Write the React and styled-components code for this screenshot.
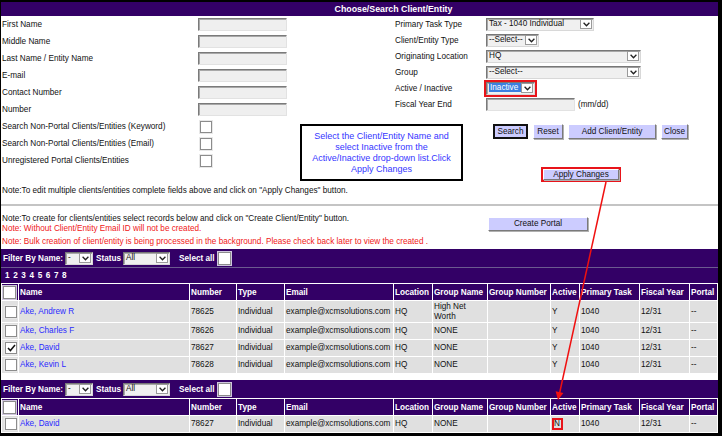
import React from 'react';
import styled, { createGlobalStyle } from 'styled-components';

const PURPLE = '#330066';

const GlobalStyle = createGlobalStyle`
  html, body {
    margin: 0;
    padding: 0;
    background: #fff;
  }
  body {
    font-family: "Liberation Sans", Arial, sans-serif;
    font-size: 8.2px;
    color: #111;
  }
  * {
    box-sizing: border-box;
  }
`;

const Frame = styled.div`
  position: relative;
  width: 722px;
  height: 436px;
  border-style: solid;
  border-color: #000;
  border-width: 2px 4px 3px 1px;
  overflow: hidden;
  background: #fff;
`;

const TitleBar = styled.div`
  height: 14px;
  background: ${PURPLE};
  color: #fff;
  font-weight: bold;
  font-size: 8.8px;
  display: flex;
  align-items: center;
  justify-content: center;
  padding-left: 68px;
`;

const FormArea = styled.div`
  display: flex;
  height: 167px;
`;

const LeftCol = styled.div`
  width: 299px;
  padding-left: 1px;
  display: grid;
  grid-auto-rows: 17px;
  align-content: start;
`;

const FieldRow = styled.div`
  display: grid;
  grid-template-columns: 196px auto;
  align-items: center;
  white-space: nowrap;
`;

const TextInput = styled.span`
  display: block;
  width: ${(p) => p.$w || 89}px;
  height: 13px;
  background: #efefef;
  border: 1px solid;
  border-color: #7a7a7a #e2e2e2 #e2e2e2 #7a7a7a;
  box-shadow: inset 1px 1px 0 #a8a8a8;
`;

const Check = styled.span`
  display: flex;
  align-items: center;
  justify-content: center;
  width: ${(p) => p.$size || 12}px;
  height: ${(p) => p.$size || 12}px;
  margin-left: ${(p) => p.$ml || 0}px;
  background: #fff;
  border: 1px solid #8c8c8c;
  box-shadow: 0 0 0 1px ${(p) => p.$halo || '#e8e8e8'};
`;

const RightCol = styled.div`
  flex: 1;
  display: flex;
  flex-direction: column;
`;

const RightFields = styled.div`
  margin-left: 95px;
  display: grid;
  grid-template-columns: 91px auto;
  grid-auto-rows: 16px;
  align-items: center;
  white-space: nowrap;
`;

const Control = styled.div`
  display: flex;
  align-items: center;
`;

const SelectBox = styled.span`
  display: inline-flex;
  align-items: center;
  width: ${(p) => p.$w}px;
  height: 13px;
  background: #f0f0f0;
  border: 1px solid;
  border-color: #777 #d8d8d8 #d8d8d8 #777;
  box-shadow: inset 1px 1px 0 #a8a8a8;
  padding-left: 1px;
  color: #111;
  font-weight: normal;
`;

const SelectText = styled.span`
  flex: 1;
  min-width: 0;
  line-height: 10px;
  white-space: nowrap;
  overflow: hidden;
  padding-left: 1px;
`;

const Highlight = styled.span`
  background: #3b7fe0;
  color: #fff;
  padding: 0 3px 0 1px;
`;

const ArrowBox = styled.span`
  display: flex;
  align-items: center;
  justify-content: center;
  width: 12px;
  height: 10px;
  margin-right: 1px;
  background: #fff;
  border: 1px solid #9a9a9a;
`;

const RedFrame = styled.span`
  display: inline-flex;
  border: 2px solid #e8141a;
  margin-left: -2px;
  line-height: 8px;
`;

const Hint = styled.span`
  margin-left: 3px;
`;

const BottomRow = styled.div`
  display: flex;
  margin-top: 12px;
`;

const Callout = styled.div`
  width: 163px;
  height: 57px;
  border: 2px solid #000;
  padding-top: 5px;
  color: #3535ff;
  font-size: 9px;
  line-height: 11px;
  text-align: center;
`;

const Actions = styled.div`
  margin-left: 30px;
  display: flex;
  flex-direction: column;
  align-items: flex-start;
`;

const ButtonRow = styled.div`
  display: flex;
  gap: 5px;
`;

const Btn = styled.button`
  width: ${(p) => p.$w}px;
  height: ${(p) => p.$h || 15}px;
  margin-top: ${(p) => p.$mt || 0}px;
  padding: 0;
  font-family: inherit;
  font-size: 8.2px;
  line-height: 8px;
  color: #111;
  background: #ccccff;
  border: 1px solid;
  border-color: ${(p) => (p.$focus ? '#111' : '#fff #7a7a7a #7a7a7a #fff')};
  box-shadow: ${(p) => (p.$focus ? 'inset 0 0 0 1px #111' : '1px 1px 0 #b0b0b0')};
  white-space: nowrap;
`;

const ApplyWrap = styled.span`
  display: inline-flex;
  margin: 28px 0 0 48px;
  border: 2px solid #e8141a;
`;

const NoteLine = styled.div`
  height: 15px;
  line-height: 15px;
  padding-left: 1px;
  white-space: nowrap;
`;

const Rule = styled.div`
  margin-top: 6px;
  height: 2px;
  background: #c4c4c4;
`;

const CreateSection = styled.div`
  display: flex;
  margin-bottom: 2px;
`;

const NoteStack = styled.div`
  width: 487px;
  padding: 8px 0 0 1px;
  white-space: nowrap;
`;

const Note = styled.div`
  line-height: 10px;
  color: ${(p) => (p.$red ? '#f01818' : '#111')};
  margin-top: ${(p) => p.$gap || 0}px;
`;

const FilterBar = styled.div`
  height: 18px;
  margin-top: ${(p) => p.$mt || 0}px;
  background: ${PURPLE};
  color: #fff;
  font-weight: bold;
  display: flex;
  align-items: center;
  padding-left: 2px;
  white-space: nowrap;
`;

const FilterLabel = styled.span`
  margin: 0 ${(p) => p.$mr || 2}px 0 ${(p) => p.$ml || 0}px;
`;

const Pager = styled.div`
  height: 16px;
  background: ${PURPLE};
  border-top: 1px solid #6c5a90;
  display: flex;
  align-items: center;
  gap: 3.6px;
  padding-left: 4px;
  color: #fff;
  font-weight: bold;
`;

const Grid = styled.table`
  width: 717px;
  table-layout: fixed;
  border-collapse: separate;
  border-spacing: 1px;
  background: #fff;
`;

const Th = styled.th`
  height: 16px;
  padding: 0 0 0 1px;
  background: ${PURPLE};
  color: #fff;
  font-weight: bold;
  text-align: left;
  white-space: nowrap;
  overflow: hidden;
`;

const Td = styled.td`
  height: ${(p) => p.$h || 16}px;
  padding: 0 1px;
  background: #e0e0e0;
  line-height: 10px;
  vertical-align: middle;
  white-space: nowrap;
  overflow: hidden;
`;

const BoxCell = styled.td`
  padding: 0 0 0 3px;
  background: ${(p) => (p.$head ? PURPLE : '#e0e0e0')};
  vertical-align: middle;
`;

const NameLink = styled.a`
  color: #2a2aff;
  text-decoration: none;
`;

const Flagged = styled.span`
  display: inline-block;
  border: 2px solid #e8141a;
  line-height: 8px;
  padding: 0 1px 0 0;
`;

const Overlay = styled.svg`
  position: absolute;
  top: 0;
  left: 0;
  pointer-events: none;
`;

const Chevron = () => (
  <svg width="7" height="5" viewBox="0 0 7 5">
    <polyline points="0.6,0.8 3.5,3.8 6.4,0.8" fill="none" stroke="#222" strokeWidth="1.3" />
  </svg>
);

const Select = ({ w, children }) => (
  <SelectBox $w={w}>
    <SelectText>{children}</SelectText>
    <ArrowBox>
      <Chevron />
    </ArrowBox>
  </SelectBox>
);

const Tick = () => (
  <svg width="9" height="8" viewBox="0 0 9 8">
    <polyline points="1,4 3.4,6.6 8,1" fill="none" stroke="#111" strokeWidth="1.5" />
  </svg>
);

const COLS = [16, 170, 46, 47, 108, 38, 54, 62, 28, 59, 49, 27];
const HEADS = ['Name', 'Number', 'Type', 'Email', 'Location', 'Group Name', 'Group Number', 'Active', 'Primary Task', 'Fiscal Year', 'Portal'];

const ROWS = [
  { name: 'Ake, Andrew R', num: '78625', group: ['High Net', 'Worth'], h: 21 },
  { name: 'Ake, Charles F', num: '78626', group: ['NONE'] },
  { name: 'Ake, David', num: '78627', group: ['NONE'], checked: true },
  { name: 'Ake, Kevin L', num: '78628', group: ['NONE'] },
];

const LEFT_FIELDS = ['First Name', 'Middle Name', 'Last Name / Entity Name', 'E-mail', 'Contact Number', 'Number'];
const LEFT_CHECKS = [
  'Search Non-Portal Clients/Entities (Keyword)',
  'Search Non-Portal Clients/Entities (Email)',
  'Unregistered Portal Clients/Entities',
];

const Filter = ({ mt }) => (
  <FilterBar $mt={mt}>
    <FilterLabel>Filter By Name:</FilterLabel>
    <Select w={28}>-</Select>
    <FilterLabel $ml={3}>Status</FilterLabel>
    <Select w={47}>All</Select>
    <FilterLabel $ml={9}>Select all</FilterLabel>
    <Check $size={13} $ml={1} $halo="#cfc6de" />
  </FilterBar>
);

const ClientTable = ({ rows }) => (
  <Grid>
    <colgroup>
      {COLS.map((w, i) => (
        <col key={i} style={{ width: w }} />
      ))}
    </colgroup>
    <thead>
      <tr>
        <BoxCell $head>
          <Check $size={13} $ml={-2} $halo="#cfc6de" />
        </BoxCell>
        {HEADS.map((h) => (
          <Th key={h}>{h}</Th>
        ))}
      </tr>
    </thead>
    <tbody>
      {rows.map((r) => (
        <tr key={r.name + r.active}>
          <BoxCell>
            <Check>{r.checked && <Tick />}</Check>
          </BoxCell>
          <Td $h={r.h}>
            <NameLink href="#">{r.name}</NameLink>
          </Td>
          <Td>{r.num}</Td>
          <Td>Individual</Td>
          <Td>example@xcmsolutions.com</Td>
          <Td>HQ</Td>
          <Td>
            {r.group.map((g, i) => (
              <div key={i}>{g}</div>
            ))}
          </Td>
          <Td />
          <Td>{r.active === 'N' ? <Flagged>N</Flagged> : 'Y'}</Td>
          <Td>1040</Td>
          <Td>12/31</Td>
          <Td>--</Td>
        </tr>
      ))}
    </tbody>
  </Grid>
);

const App = () => (
  <>
    <GlobalStyle />
    <Frame>
      <TitleBar>Choose/Search Client/Entity</TitleBar>
      <FormArea>
        <LeftCol>
          {LEFT_FIELDS.map((f) => (
            <FieldRow key={f}>
              <span>{f}</span>
              <TextInput />
            </FieldRow>
          ))}
          {LEFT_CHECKS.map((f) => (
            <FieldRow key={f}>
              <span>{f}</span>
              <Check $ml={2} />
            </FieldRow>
          ))}
        </LeftCol>
        <RightCol>
          <RightFields>
            <span>Primary Task Type</span>
            <Control>
              <Select w={108}>Tax - 1040 Individual</Select>
            </Control>
            <span>Client/Entity Type</span>
            <Control>
              <Select w={53}>--Select--</Select>
            </Control>
            <span>Originating Location</span>
            <Control>
              <Select w={155}>HQ</Select>
            </Control>
            <span>Group</span>
            <Control>
              <Select w={155}>--Select--</Select>
            </Control>
            <span>Active / Inactive</span>
            <Control>
              <RedFrame>
                <Select w={49}>
                  <Highlight>Inactive</Highlight>
                </Select>
              </RedFrame>
            </Control>
            <span>Fiscal Year End</span>
            <Control>
              <TextInput />
              <Hint>(mm/dd)</Hint>
            </Control>
          </RightFields>
          <BottomRow>
            <Callout>
              Select the Client/Entity Name and
              <br />
              select Inactive from the
              <br />
              Active/Inactive drop-down list.Click
              <br />
              Apply Changes
            </Callout>
            <Actions>
              <ButtonRow>
                <Btn $w={35} $focus>Search</Btn>
                <Btn $w={30}>Reset</Btn>
                <Btn $w={88}>Add Client/Entity</Btn>
                <Btn $w={27}>Close</Btn>
              </ButtonRow>
              <ApplyWrap>
                <Btn $w={76} $h={11}>Apply Changes</Btn>
              </ApplyWrap>
            </Actions>
          </BottomRow>
        </RightCol>
      </FormArea>
      <NoteLine>Note:To edit multiple clients/entities complete fields above and click on "Apply Changes" button.</NoteLine>
      <Rule />
      <CreateSection>
        <NoteStack>
          <Note>Note:To create for clients/entities select records below and click on "Create Client/Entity" button.</Note>
          <Note $red>Note: Without Client/Entity Email ID will not be created.</Note>
          <Note $red $gap={3}>
            Note: Bulk creation of client/entity is being processed in the background. Please check back later to view the created .
          </Note>
        </NoteStack>
        <div>
          <Btn $w={100} $h={14} $mt={11}>Create Portal</Btn>
        </div>
      </CreateSection>
      <Filter />
      <Pager>
        {[1, 2, 3, 4, 5, 6, 7, 8].map((n) => (
          <span key={n}>{n}</span>
        ))}
      </Pager>
      <ClientTable rows={ROWS} />
      <Filter mt={6} />
      <ClientTable rows={[{ name: 'Ake, David', num: '78627', group: ['NONE'], active: 'N' }]} />
      <Overlay width="717" height="431">
        <line x1="605" y1="180" x2="558.6" y2="391" stroke="#f01010" strokeWidth="1.5" />
        <polygon points="557,398 554.6,389.2 562.4,390.9" fill="#f01010" />
      </Overlay>
    </Frame>
  </>
);

export default App;
